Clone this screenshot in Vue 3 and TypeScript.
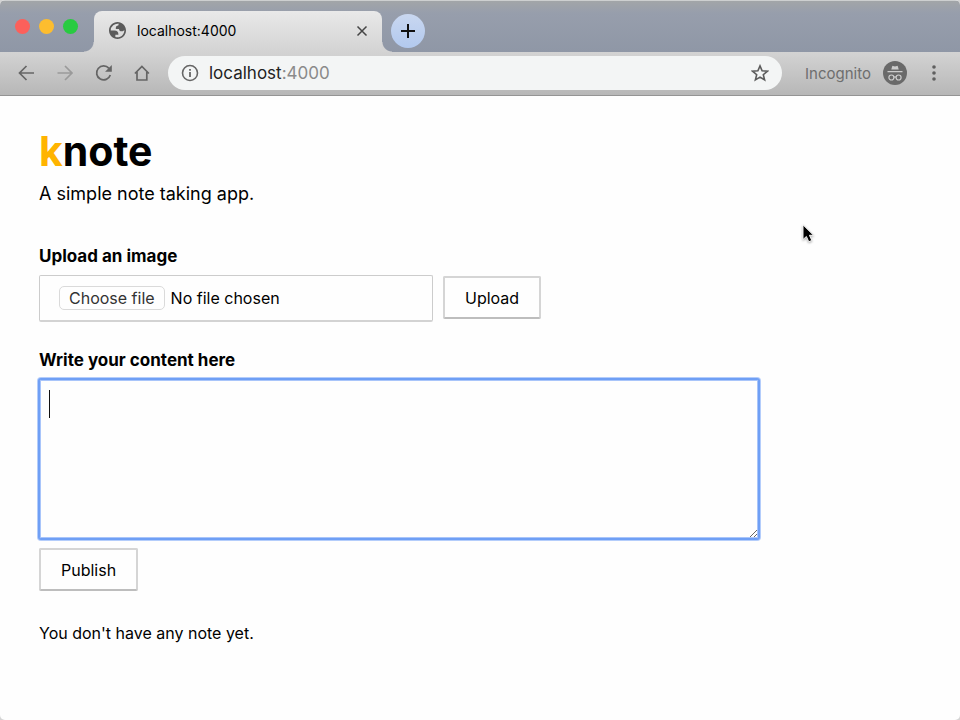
<script setup lang="ts">
import { ref, onMounted } from 'vue'

const address = { host: 'localhost', port: ':4000' }
const fileName = ref('')
const content = ref('')
const editor = ref<HTMLTextAreaElement | null>(null)

function onFile(event: Event) {
  const input = event.target as HTMLInputElement
  fileName.value = input.files?.[0]?.name ?? ''
}

onMounted(() => editor.value?.focus())
</script>

<template>
  <div class="window">
    <header class="chrome">
      <div class="tabstrip">
        <div class="lights">
          <button class="light red" aria-label="Close window"></button>
          <button class="light yellow" aria-label="Minimise window"></button>
          <button class="light green" aria-label="Zoom window"></button>
        </div>
        <div class="tab">
          <svg class="globe" viewBox="2 2 20 20" aria-hidden="true">
            <path fill="#5b5b5b" fill-rule="evenodd" d="M12 2c5.523 0 10 4.477 10 10s-4.477 10-10 10S2 17.523 2 12 6.477 2 12 2zM4 12h4.400c3.407.022 4.922 1.730 4.543 5.127H9.488v2.470a8.004 8.004 0 0 0 10.498-8.083C19.327 12.504 18.332 13 17 13c-2.137 0-3.206-.916-3.206-2.750h-3.748c-.274-2.728.683-4.092 2.870-4.092 0-.975.327-1.597.811-1.970A8.004 8.004 0 0 0 4 12z" />
          </svg>
          <span class="tab-title">localhost:4000</span>
          <button class="tab-close" aria-label="Close tab">
            <svg viewBox="0 0 12 12"><path d="M1.500 1.500 10.500 10.500M10.500 1.500 1.500 10.500" fill="none" stroke="#454545" stroke-width="1.500" /></svg>
          </button>
        </div>
        <button class="new-tab" aria-label="New tab">
          <svg viewBox="0 0 14 14"><path d="M7 0V14M0 7H14" stroke="#111" stroke-width="2" /></svg>
        </button>
      </div>

      <nav class="toolbar" aria-label="Browser toolbar">
        <div class="nav-icons">
          <button class="icon" aria-label="Back">
            <svg viewBox="0 0 18 18"><path d="M17 9H3M9.500 2 2.500 9 9.500 16" /></svg>
          </button>
          <button class="icon faded" aria-label="Forward">
            <svg viewBox="0 0 18 18"><path d="M1.500 9H15.500M9 2 16 9 9 16" /></svg>
          </button>
          <button class="icon" aria-label="Reload">
            <svg viewBox="0 0 18 18"><path d="M14 4.400A7 7 0 1 0 15.300 11" /><path class="solid" d="M16.800 1V7.700H10.100Z" /></svg>
          </button>
          <button class="icon" aria-label="Home">
            <svg viewBox="0 0 18 18"><path d="M.9 9.500 7.900 2.500 14.900 9.500M3 8V16H12.800V8" /></svg>
          </button>
        </div>
        <div class="omnibox">
          <svg class="info" viewBox="0 0 18 18" aria-hidden="true">
            <circle cx="9" cy="9" r="7.500" fill="none" stroke="#666" stroke-width="1.600" />
            <path d="M9 8V13" stroke="#666" stroke-width="1.800" />
            <path d="M9 5V6.800" stroke="#666" stroke-width="1.800" />
          </svg>
          <span class="url">{{ address.host }}<span class="port">{{ address.port }}</span></span>
          <button class="star" aria-label="Bookmark this tab">
            <svg viewBox="0 0 18 18"><path d="M9 1.900 11.100 6.800 16.400 7.200 12.300 10.700 13.600 15.900 9 13.100 4.400 15.900 5.700 10.700 1.600 7.200 6.900 6.800Z" fill="none" stroke="#5c5c5c" stroke-width="1.600" /></svg>
          </button>
        </div>
        <div class="incognito">
          <span class="mode">Incognito</span>
          <svg viewBox="0 0 24 24" aria-hidden="true">
            <circle cx="12" cy="12" r="12" fill="#6a6a6a" />
            <path d="M8.300 8.600 9.200 5.300Q9.400 4.700 10.100 4.900L12 5.400 13.900 4.900Q14.600 4.700 14.800 5.300L15.700 8.600Z" fill="#cdcdcd" />
            <path d="M4.500 10.700H19.500" stroke="#cdcdcd" stroke-width="1.300" />
            <g fill="none" stroke="#cdcdcd" stroke-width="1.200">
              <circle cx="8.400" cy="16.500" r="2.500" />
              <circle cx="15.600" cy="16.500" r="2.500" />
              <path d="M10.900 16.200Q12 15.400 13.100 16.200" />
            </g>
          </svg>
        </div>
        <button class="menu" aria-label="Menu">
          <svg viewBox="0 0 4 16"><circle cx="2" cy="2" r="1.800" /><circle cx="2" cy="8" r="1.800" /><circle cx="2" cy="14" r="1.800" /></svg>
        </button>
      </nav>
    </header>

    <main class="page">
      <h1><span class="accent">k</span>note</h1>
      <p class="tagline">A simple note taking app.</p>

      <form @submit.prevent>
        <label class="heading" for="image">Upload an image</label>
        <div class="upload-row">
          <label class="file-box">
            <input id="image" class="file-input" type="file" name="image" @change="onFile" />
            <span class="choose">Choose file</span>
            <span class="file-name">{{ fileName || 'No file chosen' }}</span>
          </label>
          <button class="btn upload" type="submit">Upload</button>
        </div>

        <label class="heading" for="content">Write your content here</label>
        <textarea id="content" ref="editor" v-model="content" :class="{ empty: !content }" name="description"></textarea>
        <button class="btn publish" type="submit">Publish</button>
      </form>

      <p class="notes">You don't have any note yet.</p>
    </main>

    <svg class="pointer" viewBox="0 0 16 24" aria-hidden="true">
      <path d="M2 2V18L5.700 14.700 8.300 20.500 11.600 19 9 13.400H13.500Z" fill="#000" stroke="#fff" stroke-width="1" />
    </svg>
  </div>
</template>

<style>
body {
  background: #d4d4d4;
}
</style>

<style scoped>
* {
  box-sizing: border-box;
}
.window {
  position: relative;
  display: flex;
  flex-direction: column;
  min-height: 100vh;
  overflow: hidden;
  border-radius: 5px;
  background: #fefefe;
  color: #000;
  font: 16px/24px Inter, "Liberation Sans", sans-serif;
}
button {
  font: inherit;
  color: inherit;
  padding: 0;
  border: 0;
  background: none;
}
svg {
  display: block;
}
.chrome {
  border-bottom: 1px solid #949494;
}
.tabstrip {
  display: flex;
  align-items: flex-end;
  height: 52px;
  border-top: 1px solid #cdcfd0;
  background: linear-gradient(#a2a5a8, #979eac 24%, #8f97a6);
}
.lights {
  display: flex;
  align-self: flex-start;
  gap: 9px;
  width: 94px;
  padding: 18px 0 0 15px;
}
.light {
  width: 15px;
  height: 15px;
  border-radius: 50%;
}
.red { background: #fc605b; }
.yellow { background: #fdbd2f; }
.green { background: #28cb41; }
.tab {
  position: relative;
  display: flex;
  align-items: center;
  flex: 0 1 288px;
  height: 41px;
  padding: 0 14px 2px 15px;
  border-radius: 8px 8px 0 0;
  background: linear-gradient(#e9e9e9, #d3d3d3);
}
.tab::before,
.tab::after {
  content: "";
  position: absolute;
  bottom: 0;
  width: 10px;
  height: 10px;
}
.tab::before {
  right: 100%;
  background: radial-gradient(circle at 0 0, transparent 9px, #d4d4d4 10px);
}
.tab::after {
  left: 100%;
  background: radial-gradient(circle at 100% 0, transparent 9px, #d4d4d4 10px);
}
.globe {
  width: 17px;
  height: 17px;
}
.tab-title {
  flex: 1;
  margin-left: 11px;
  font-size: 14px;
}
.tab-close svg {
  width: 12px;
  height: 12px;
}
.new-tab {
  display: grid;
  place-items: center;
  width: 34px;
  height: 34px;
  margin: 0 0 4px 9px;
  border-radius: 50%;
  background: linear-gradient(#c9d7f0, #b2c9ee);
}
.new-tab svg {
  width: 14px;
  height: 14px;
}
.toolbar {
  display: flex;
  align-items: center;
  height: 43px;
  padding: 0 18px 2px 17px;
  background: linear-gradient(#d3d3d3, #b7b7b7);
}
.nav-icons {
  display: flex;
  gap: 21px;
}
.icon svg,
.star svg {
  width: 18px;
  height: 18px;
}
.icon path {
  fill: none;
  stroke: #656565;
  stroke-width: 1.700;
}
.icon .solid {
  fill: #656565;
  stroke: none;
}
.faded path {
  stroke: #9a9a9a;
}
.omnibox {
  display: flex;
  align-items: center;
  flex: 1;
  height: 34px;
  margin: 0 23px 0 16px;
  padding: 0 13px;
  border-radius: 17px;
  background: #f3f5f5;
}
.info {
  width: 18px;
  height: 18px;
}
.url {
  flex: 1;
  margin-left: 10px;
  color: #222;
  font-size: 17px;
}
.port {
  color: #8a8a8a;
}
.incognito {
  display: flex;
  align-items: center;
  gap: 12px;
  color: #6e6e6e;
  font-size: 15px;
}
.mode {
  padding-top: 2px;
}
.incognito svg {
  width: 24px;
  height: 24px;
}
.menu {
  width: 17px;
  margin-left: 18px;
}
.menu svg {
  width: 4px;
  height: 16px;
  margin: 0 auto;
  fill: #5f5f5f;
}
.page {
  padding: 30px 39px;
}
h1 {
  margin: 0;
  font-size: 41px;
  line-height: 50px;
  font-weight: 700;
}
.accent {
  color: #ffb400;
}
.tagline {
  margin: 4px 0 36px;
  font-size: 18px;
  line-height: 28px;
}
.heading {
  display: block;
  margin-bottom: 7px;
  font-size: 17px;
  font-weight: 700;
}
.upload-row {
  display: flex;
  align-items: center;
  gap: 10px;
  margin-bottom: 26px;
}
.file-box {
  position: relative;
  display: flex;
  align-items: center;
  gap: 6px;
  width: 394px;
  height: 47px;
  padding: 0 19px;
  border: 1px solid #ccc;
  border-bottom: 2px solid #d3d3d3;
  border-radius: 2px;
}
.file-input {
  position: absolute;
  inset: 0;
  width: 100%;
  height: 100%;
  margin: 0;
  opacity: 0;
}
.choose {
  padding: 0 9px;
  border: 1px solid #dadada;
  border-radius: 5px;
  color: #333;
  line-height: 22px;
}
.btn {
  height: 43px;
  padding: 0 19px;
  border: 2px solid #d5d5d5;
  border-bottom-color: #bdbdbd;
  border-radius: 2px;
}
textarea {
  display: block;
  width: 100%;
  max-width: 720px;
  height: 160px;
  margin: 0;
  padding: 10px;
  border: 1px solid #6f9ff5;
  border-radius: 2px;
  outline: 0;
  box-shadow: inset 0 0 0 1px #a9c5fa, 0 0 0 1px #6f9ff5, 0 0 0 2px #b4cdfb;
  background-color: #fefefe;
  font: inherit;
  resize: both;
}
/* A tall insertion bar stands in the box until something is typed. */
.empty {
  caret-color: transparent;
  background-image: linear-gradient(#111, #111);
  background-repeat: no-repeat;
  background-size: 1px 28px;
  background-position: 9px 10px;
}
.btn {
  padding: 0 20px;
}
.upload {
  margin-bottom: 2px;
}
.publish {
  display: block;
  margin-top: 9px;
}
.notes {
  margin: 30px 0 0;
}
.pointer {
  position: absolute;
  left: 801px;
  top: 223px;
  width: 15px;
  height: 22px;
  filter: drop-shadow(0 1px 1px #0005);
}
</style>
